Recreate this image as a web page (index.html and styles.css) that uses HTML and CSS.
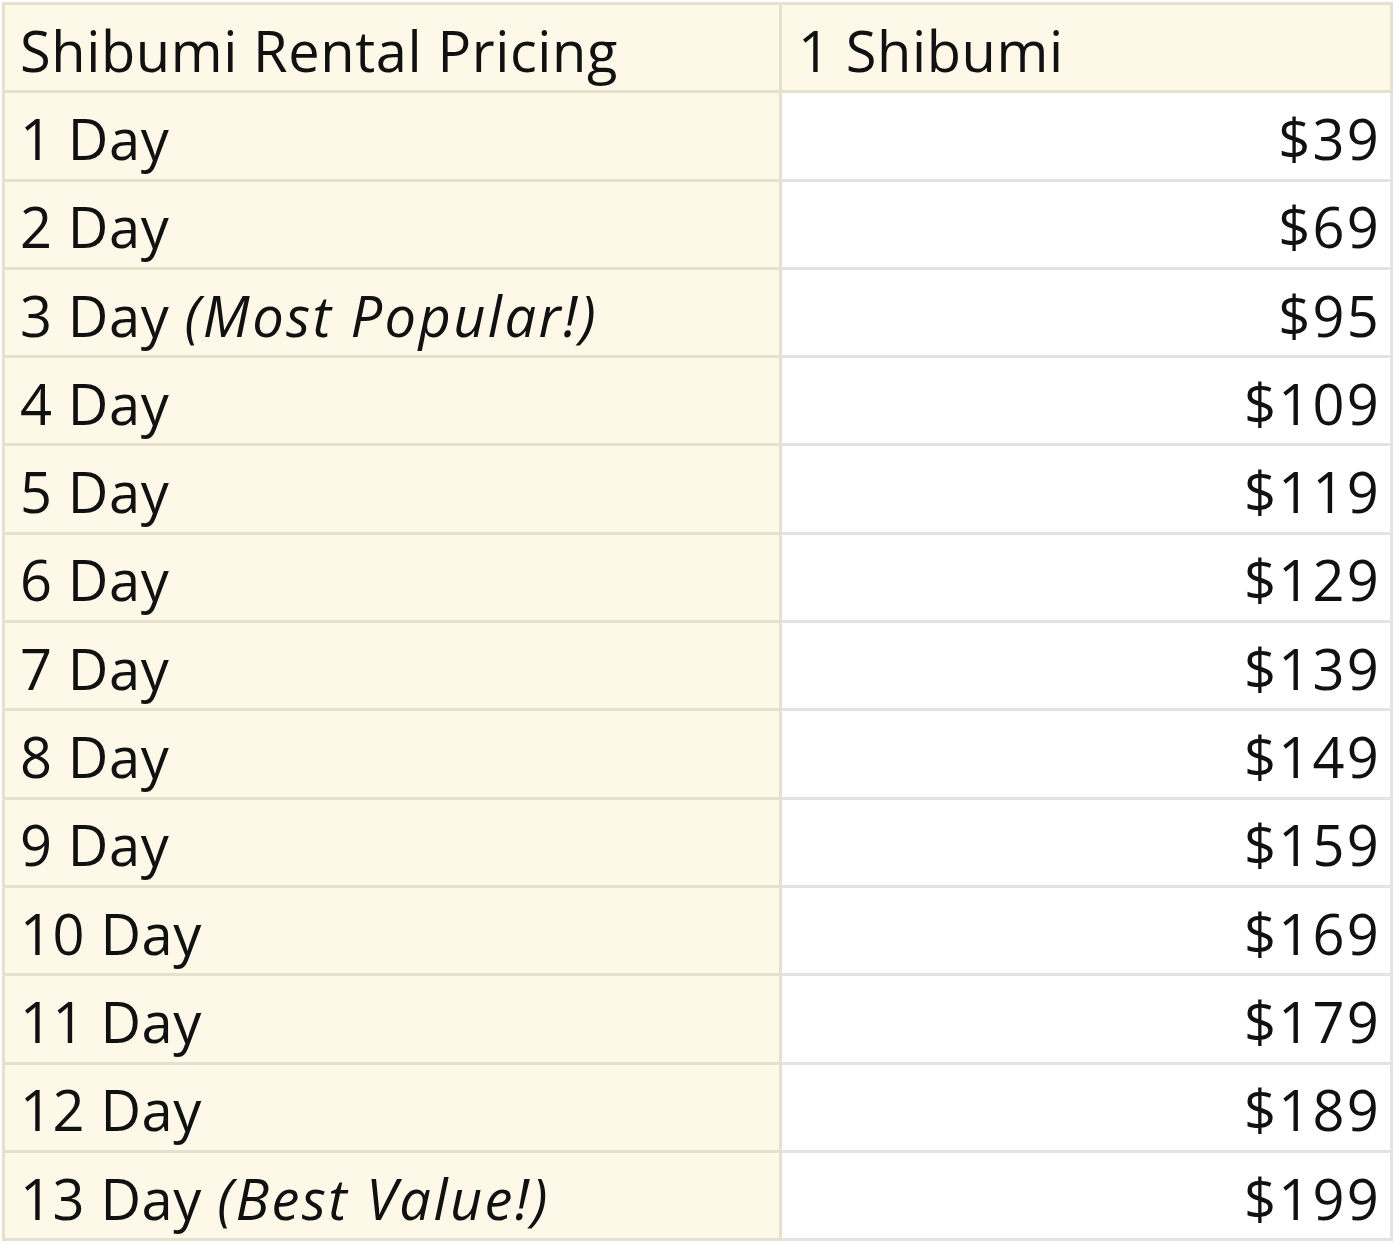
FILE: index.html
```html
<!DOCTYPE html>
<html>
<head>
<meta charset="utf-8">
<link rel="stylesheet" href="styles.css">
</head>
<body>
<table class="pricing">
  <tr class="head"><td class="label">Shibumi Rental Pricing</td><td class="colhead">1 Shibumi</td></tr>
  <tr><td class="label">1 Day</td><td class="price">$39</td></tr>
  <tr><td class="label">2 Day</td><td class="price">$69</td></tr>
  <tr><td class="label">3 Day <em>(Most Popular!)</em></td><td class="price">$95</td></tr>
  <tr><td class="label">4 Day</td><td class="price">$109</td></tr>
  <tr><td class="label">5 Day</td><td class="price">$119</td></tr>
  <tr><td class="label">6 Day</td><td class="price">$129</td></tr>
  <tr><td class="label">7 Day</td><td class="price">$139</td></tr>
  <tr><td class="label">8 Day</td><td class="price">$149</td></tr>
  <tr><td class="label">9 Day</td><td class="price">$159</td></tr>
  <tr><td class="label">10 Day</td><td class="price">$169</td></tr>
  <tr><td class="label">11 Day</td><td class="price">$179</td></tr>
  <tr><td class="label">12 Day</td><td class="price">$189</td></tr>
  <tr><td class="label">13 Day <em>(Best Value!)</em></td><td class="price">$199</td></tr>
</table>
</body>
</html>
```
FILE: styles.css
```css
html, body {
  margin: 0;
  padding: 0;
  background: #ffffff;
}
body {
  padding: 2px 0 0 2px;
  font-family: "Open Sans", Lato, sans-serif;
  color: #111111;
}
.pricing {
  border-collapse: collapse;
  width: 1391px;
  table-layout: fixed;
}
.pricing td {
  height: 81.3px;
  padding: 4px 12px 0 14px;
  font-size: 56px;
  font-weight: 500;
  letter-spacing: 0.6px;
  line-height: 1;
  vertical-align: middle;
  border: 3px solid #e3e3e3;
  white-space: nowrap;
}
.pricing td.label {
  width: 747px;
  background: #fdf8e8;
  border-color: #e6e1cf;
  padding-left: 15px;
}
.pricing tr.head td {
  background: #fdf8e8;
  border-color: #e6e1cf;
}
.pricing td.colhead {
  padding-left: 16px;
}
.pricing td.price {
  text-align: right;
  background: #ffffff;
  padding-right: 9px;
  letter-spacing: 2.2px;
}
.pricing em {
  font-style: italic;
  letter-spacing: 2.4px;
}
```
